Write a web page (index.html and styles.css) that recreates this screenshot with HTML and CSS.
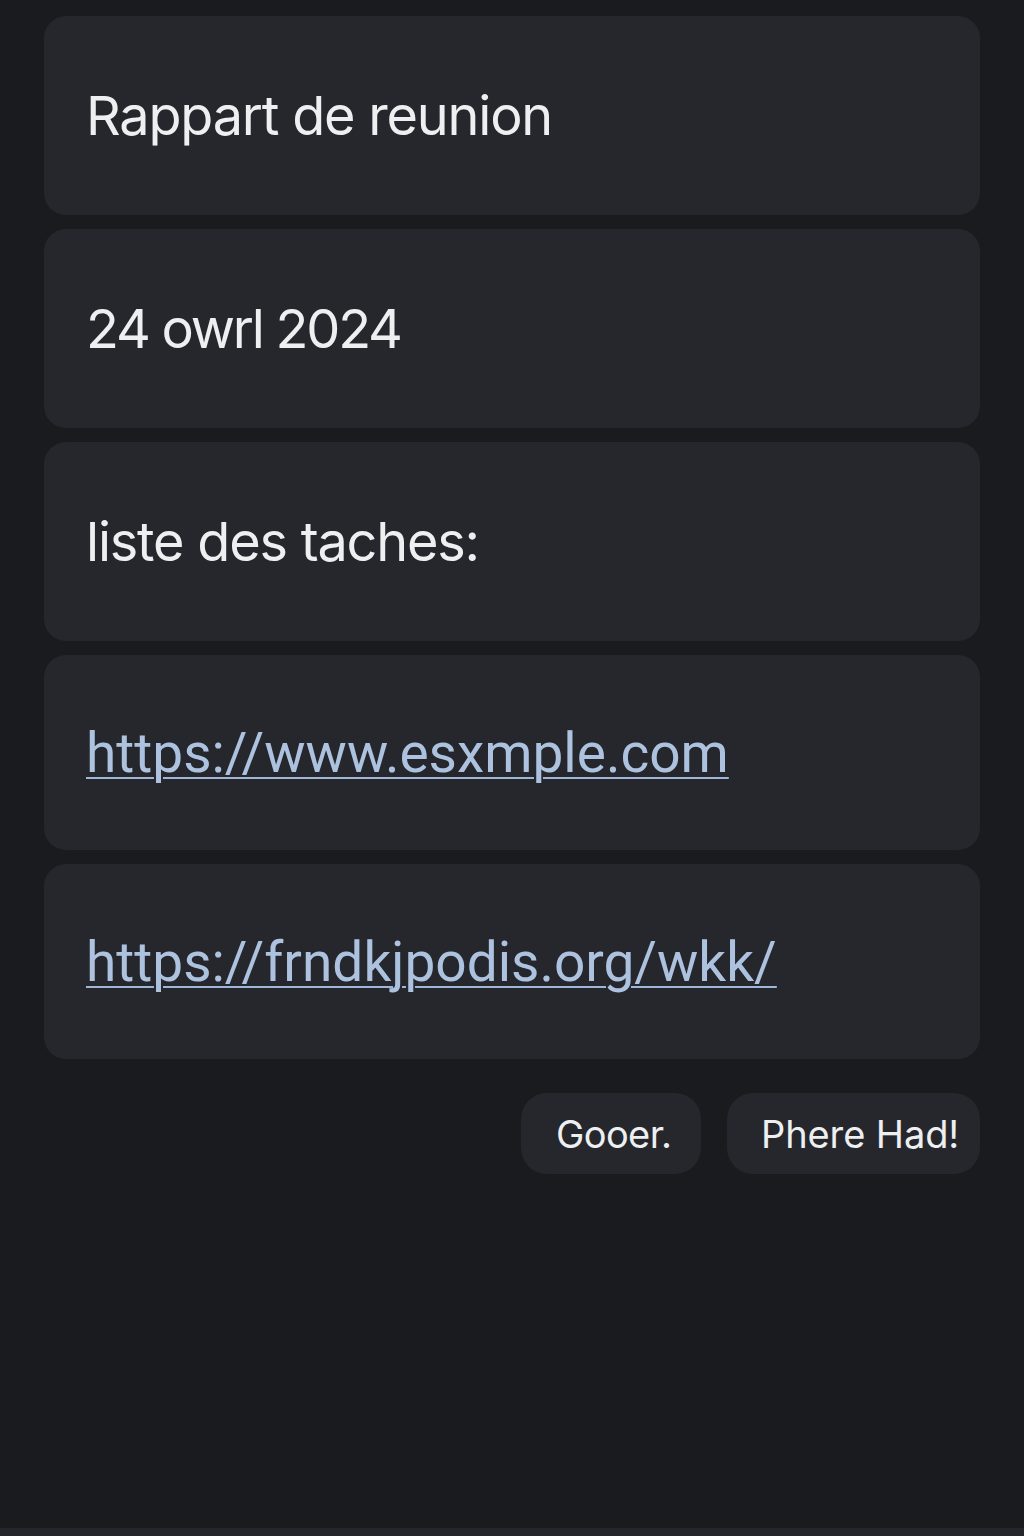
FILE: index.html
```html
<!DOCTYPE html>
<html lang="fr">
<head>
<meta charset="utf-8">
<title>Rappart de reunion</title>
<link rel="stylesheet" href="styles.css">
</head>
<body>
<main class="page">
  <section class="card card-tall"><h1 class="title">Rappart de reunion</h1></section>
  <section class="card card-tall"><p class="text text-date">24 owrl 2024</p></section>
  <section class="card card-tall"><p class="text">liste des taches:</p></section>
  <section class="card card-short"><a class="link" href="#">https://www.esxmple.com</a></section>
  <section class="card card-short"><a class="link" href="#">https://frndkjpodis.org/wkk/</a></section>
  <div class="actions">
    <button class="btn btn-a" type="button">Gooer.</button>
    <button class="btn btn-b" type="button">Phere Had!</button>
  </div>
</main>
<div class="bottom-strip"></div>
</body>
</html>
```
FILE: styles.css
```css
html, body {
  margin: 0;
  padding: 0;
  background: #1a1b1f;
  height: 1536px;
  overflow: hidden;
}
body {
  font-family: Inter, "Noto Sans", sans-serif;
  color: #eeeff1;
  position: relative;
}
.page {
  display: flex;
  flex-direction: column;
  gap: 14px;
  padding: 16px 44px 0 44px;
}
.card {
  background: #25272d;
  border-radius: 22px;
  display: flex;
  align-items: center;
  padding: 0 42px;
  box-sizing: border-box;
}
.card-tall { height: 199px; }
.card-short { height: 195px; }
.title, .text {
  margin: 0;
  font-size: 54px;
  font-weight: 400;
  letter-spacing: -1.2px;
  color: #eeeff1;
}
.text-date { letter-spacing: -2.2px; }
.link {
  font-family: Roboto, "Liberation Sans", sans-serif;
  font-size: 55px;
  letter-spacing: 0;
  color: #adc2de;
  text-decoration: underline;
  text-decoration-thickness: 2px;
  text-underline-offset: 5px;
  text-decoration-color: #9fb6d6;
}
.actions {
  display: flex;
  justify-content: flex-end;
  gap: 26px;
  margin-top: 20px;
}
.btn {
  height: 81px;
  border: none;
  border-radius: 26px;
  background: #25272c;
  color: #eeeff1;
  font-family: Inter, "Noto Sans", sans-serif;
  font-size: 38px;
  letter-spacing: -0.6px;
  padding: 0 0 0 34px;
  text-align: left;
  box-sizing: border-box;
}
.btn-a { width: 180px; padding-left: 35px; }
.btn-b { width: 253px; letter-spacing: -0.1px; }
.bottom-strip {
  position: absolute;
  left: 0;
  right: 0;
  bottom: 0;
  height: 8px;
  background: #24262c;
}
```
